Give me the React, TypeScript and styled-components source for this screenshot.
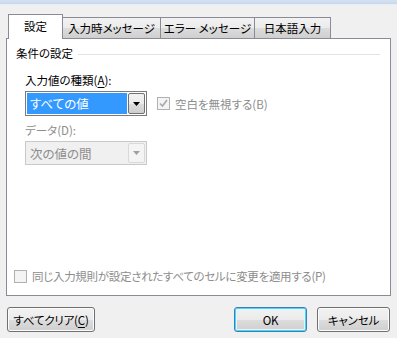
import React from "react";
import styled, { createGlobalStyle } from "styled-components";

const Global = createGlobalStyle`
  html, body { margin: 0; padding: 0; background: #f0f0f0; }
  body {
    font-family: "Noto Sans CJK JP", "Noto Sans", sans-serif;
    font-size: 11.5px;
    color: #000;
    font-feature-settings: "palt" 1;
    font-kerning: normal;
  }
`;

const Window = styled.div`
  width: 397px;
  height: 338px;
  background: #f0f0f0;
  display: flex;
  flex-direction: column;
  overflow: hidden;
`;

const TopStrip = styled.div`
  height: 4px;
  background: linear-gradient(#d3e1f1, #c8d9ee);
  border-bottom: 1px solid #e6edf5;
`;

const TabRow = styled.div`
  display: flex;
  align-items: flex-end;
  height: 29px;
  margin-top: 5px;
  padding-left: 8px;
  position: relative;
  z-index: 1;
  margin-bottom: -1px;
`;

const Tab = styled.div<{ $active?: boolean; $w: number }>`
  box-sizing: border-box;
  width: ${(p) => p.$w}px;
  height: ${(p) => (p.$active ? 25 : 22)}px;
  border: 1px solid #898c95;
  border-bottom: ${(p) => (p.$active ? "none" : "1px solid #898c95")};
  margin-left: ${(p) => (p.$active ? 0 : -1)}px;
  background: ${(p) =>
    p.$active
      ? "#ffffff"
      : "linear-gradient(#f2f2f2 0%, #ebebeb 50%, #dddddd 50%, #cfcfcf 100%)"};
  display: flex;
  align-items: center;
  justify-content: center;
  padding-bottom: ${(p) => (p.$active ? 2 : 0)}px;
  white-space: nowrap;
  position: relative;
  z-index: ${(p) => (p.$active ? 2 : 1)};
`;

const Panel = styled.div`
  box-sizing: border-box;
  margin: 0 6px;
  height: 258px;
  border: 1px solid #898c95;
  background: #ffffff;
  display: flex;
  flex-direction: column;
  padding: 5px 10px 0 9px;
`;

const GroupHeader = styled.div`
  display: flex;
  align-items: center;
  gap: 5px;
  height: 16px;
  margin-top: 1px;
`;

const GroupLine = styled.div`
  flex: 1;
  height: 1px;
  background: #dde4ea;
  margin-top: 2px;
`;

const Group = styled.div`
  display: flex;
  flex-direction: column;
  padding-left: 9px;
`;

const Label = styled.div<{ $disabled?: boolean }>`
  height: 16px;
  line-height: 16px;
  color: ${(p) => (p.$disabled ? "#8d8d8d" : "#000")};
  margin-top: ${(p) => (p.$disabled ? 6 : 11)}px;
`;

const Row = styled.div<{ $gap?: number }>`
  display: flex;
  align-items: center;
  gap: 10px;
  margin-top: ${(p) => p.$gap ?? 3}px;
`;

const Select = styled.div<{ $disabled?: boolean; $h: number }>`
  box-sizing: border-box;
  width: 122px;
  height: ${(p) => p.$h}px;
  border: 1px solid ${(p) => (p.$disabled ? "#c9c9c9" : "#7a7a7a")};
  background: ${(p) => (p.$disabled ? "#f0f0f0" : "#ffffff")};
  display: flex;
  padding: 1px;
  gap: 1px;
`;

const SelectValue = styled.div<{ $disabled?: boolean }>`
  flex: 1;
  display: flex;
  align-items: center;
  padding-left: 3px;
  background: ${(p) => (p.$disabled ? "transparent" : "#3399ff")};
  color: ${(p) => (p.$disabled ? "#8d8d8d" : "#ffffff")};
  font-size: 12.5px;
`;

const DropButton = styled.div<{ $disabled?: boolean }>`
  box-sizing: border-box;
  width: 17px;
  border: 1px solid ${(p) => (p.$disabled ? "#d9d9d9" : "#707070")};
  border-radius: 2px;
  background: ${(p) =>
    p.$disabled
      ? "#f4f4f4"
      : "linear-gradient(#f2f2f2 0%, #ebebeb 50%, #dddddd 50%, #cfcfcf 100%)"};
  display: flex;
  align-items: center;
  justify-content: center;
`;

const CheckLabel = styled.label<{ $disabled?: boolean; $tight?: boolean }>`
  display: flex;
  align-items: center;
  gap: 5px;
  color: ${(p) => (p.$disabled ? "#8d8d8d" : "#000")};
  white-space: nowrap;
  letter-spacing: ${(p) => (p.$tight ? "-0.3px" : "0")};
`;

const Box = styled.span`
  box-sizing: border-box;
  width: 13px;
  height: 13px;
  border: 1px solid #b1b1b1;
  background: #f4f4f4;
  display: inline-flex;
  align-items: center;
  justify-content: center;
`;

const Spacer = styled.div`
  flex: 1;
`;

const BottomCheck = styled.div`
  margin-left: -2px;
  margin-bottom: 11px;
`;

const ButtonBar = styled.div`
  display: flex;
  align-items: center;
  padding: 0 7px;
  margin-top: 11px;
  gap: 10px;
`;

const Button = styled.button<{ $default?: boolean; $w: number }>`
  box-sizing: border-box;
  width: ${(p) => p.$w}px;
  height: 25px;
  border: 1px solid ${(p) => (p.$default ? "#3c7fb1" : "#707070")};
  border-radius: 3px;
  background: linear-gradient(#f2f2f2 0%, #ebebeb 50%, #dddddd 50%, #cfcfcf 100%);
  box-shadow: ${(p) =>
    p.$default ? "inset 0 0 0 1px #48d6fb, inset 0 0 0 2px #e6f5fc" : "inset 0 0 0 1px #fcfcfc"};
  font-family: inherit;
  font-size: 11.5px;
  font-feature-settings: "palt" 1;
  letter-spacing: -0.2px;
  color: #000;
  padding: 0;
  display: flex;
  align-items: center;
  justify-content: center;
`;

const U = styled.span`
  text-decoration: underline;
  text-underline-offset: 2px;
`;

const Arrow = ({ color }: { color: string }) => (
  <svg width="7" height="4" viewBox="0 0 7 4">
    <path d="M0 0 H7 L3.5 4 Z" fill={color} />
  </svg>
);

const Check = () => (
  <svg width="9" height="9" viewBox="0 0 9 9">
    <path d="M1 4.5 L3.5 7 L8 1" stroke="#a8a8a8" strokeWidth="1.6" fill="none" />
  </svg>
);

export default function App() {
  return (
    <>
      <Global />
      <Window>
        <TopStrip />
        <TabRow>
          <Tab $active $w={55}>設定</Tab>
          <Tab $w={99}>入力時メッセージ</Tab>
          <Tab $w={95}>エラー メッセージ</Tab>
          <Tab $w={77}>日本語入力</Tab>
        </TabRow>
        <Panel>
          <GroupHeader>
            <span>条件の設定</span>
            <GroupLine />
          </GroupHeader>
          <Group>
            <Label>
              入力値の種類(<U>A</U>):
            </Label>
            <Row>
              <Select $h={25}>
                <SelectValue>すべての値</SelectValue>
                <DropButton>
                  <Arrow color="#000" />
                </DropButton>
              </Select>
              <CheckLabel $disabled>
                <Box>
                  <Check />
                </Box>
                空白を無視する(B)
              </CheckLabel>
            </Row>
            <Label $disabled>データ(D):</Label>
            <Row $gap={3}>
              <Select $disabled $h={24}>
                <SelectValue $disabled>次の値の間</SelectValue>
                <DropButton $disabled>
                  <Arrow color="#a0a0a0" />
                </DropButton>
              </Select>
            </Row>
          </Group>
          <Spacer />
          <BottomCheck>
            <CheckLabel $disabled $tight>
              <Box />
              同じ入力規則が設定されたすべてのセルに変更を適用する(P)
            </CheckLabel>
          </BottomCheck>
        </Panel>
        <ButtonBar>
          <Button $w={88}>
            すべてクリア(<U>C</U>)
          </Button>
          <Spacer />
          <Button $default $w={73}>
            OK
          </Button>
          <Button $w={73}>キャンセル</Button>
        </ButtonBar>
      </Window>
    </>
  );
}
